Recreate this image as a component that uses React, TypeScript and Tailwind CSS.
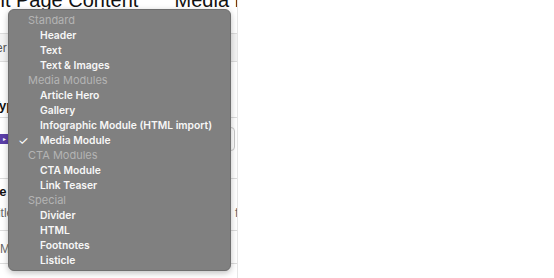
const groups: { title: string; items: string[] }[] = [
  { title: "Standard", items: ["Header", "Text", "Text & Images"] },
  {
    title: "Media Modules",
    items: ["Article Hero", "Gallery", "Infographic Module (HTML import)", "Media Module"],
  },
  { title: "CTA Modules", items: ["CTA Module", "Link Teaser"] },
  { title: "Special", items: ["Divider", "HTML", "Footnotes", "Listicle"] },
]

const selected = "Media Module"

function BackgroundPage() {
  return (
    <div className="w-[238px] h-[278px] overflow-hidden border-r border-[#e6e6e6] bg-white font-['Liberation_Sans',sans-serif]">
      <h1 className="ml-[-24px] mt-[-10px] h-[20px] whitespace-nowrap text-[20px] leading-[20px] text-[#111]">
        Edit Page Content <span className="mx-[7px]">_</span> Media Module
      </h1>
      <div className="mt-[23px] flex h-[29px] items-center border-y border-[#dcdcdc] bg-[#f3f3f3] text-[12px] leading-[14px] text-[#555]">
        <span className="ml-[-32px]">Banner</span>
      </div>
      <div className="mt-[11px] ml-[-50px] text-[13px] leading-[15px] font-bold text-[#111]">Content</div>
      <div className="mt-[10px] ml-[-8px] text-[13px] leading-[15px] font-bold text-[#111]">Type</div>
      <div className="mt-[4px] border-t border-[#dcdcdc]" />
      <div className="mt-[9px] flex h-[24px] items-center">
        <div className="flex h-[10px] w-[8px] items-center justify-center bg-[#5b3fa8] text-[6px] leading-[6px] text-white">▸</div>
        <div className="ml-auto mr-[2px] flex h-[24px] w-[40px] items-center justify-end rounded-[4px] border border-[#c8c8c8] pr-[2px] text-[8px] leading-[8px] text-[#555]">
          ⇕
        </div>
      </div>
      <div className="mt-[27px] border-t border-[#dcdcdc]" />
      <div className="mt-[5px] ml-[-20px] text-[13px] leading-[15px] font-bold text-[#111]">Title</div>
      <div className="mt-[7px] flex text-[12px] leading-[14px] text-[#666]">
        <span className="ml-[-9px]">Title</span>
        <span className="ml-auto mr-[-10px]">fix</span>
      </div>
      <div className="mt-[10px] border-t border-[#dcdcdc]" />
      <div className="mt-[11px] text-[12px] leading-[14px] text-[#666]">Meta</div>
      <div className="mt-[7px] border-t border-[#dcdcdc]" />
    </div>
  )
}

function DropdownMenu() {
  return (
    <div className="absolute left-[8px] top-[9px] w-[223px] rounded-[6px] border border-[#6e6e6e] bg-[#808080] pt-[3px] pb-[2px] shadow-[0_2px_6px_rgba(0,0,0,0.25)] font-['Inter',sans-serif]">
      {groups.map((g) => (
        <div key={g.title}>
          <div className="flex h-[15px] items-center pl-[19px] text-[11px] text-[#b4b4b4]">{g.title}</div>
          {g.items.map((item) => (
            <div
              key={item}
              className="relative flex h-[15px] items-center pl-[31px] text-[10.3px] font-semibold text-[#f7f7f7]"
            >
              {item === selected && (
                <span className="absolute left-[9px] text-[12px] font-normal text-white">✓</span>
              )}
              {item}
            </div>
          ))}
        </div>
      ))}
    </div>
  )
}

export default function App() {
  return (
    <div className="relative h-[278px] w-[554px] overflow-hidden bg-white">
      <BackgroundPage />
      <DropdownMenu />
    </div>
  )
}
